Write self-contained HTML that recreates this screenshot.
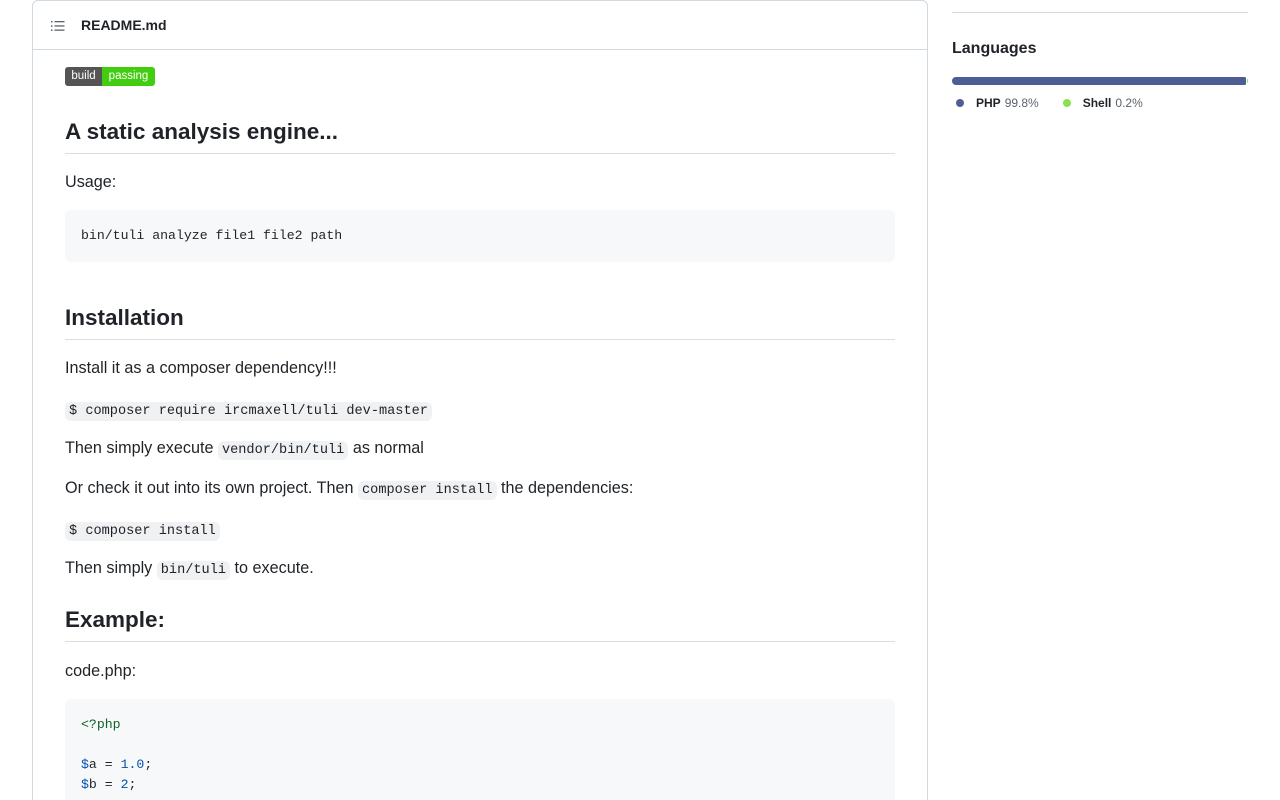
<!DOCTYPE html>
<html><head><meta charset="utf-8"><style>
*{box-sizing:border-box;margin:0;padding:0}
html,body{width:1280px;height:800px;overflow:hidden}
body{background:#fff;font-family:"Liberation Sans",sans-serif;color:#1f2328;position:relative}
.box{position:absolute;left:32px;top:0;width:896px;height:830px;border:1px solid #d1d9e0;border-radius:6px}
.hdr{position:absolute;left:0;top:0;right:0;height:49px;border-bottom:1px solid #d1d9e0}
.hdr span{position:absolute;left:48px;top:16px;font-size:14px;font-weight:bold}
.a{position:absolute;left:65px;white-space:nowrap}
p.a{font-size:16.2px;line-height:24px}
h2.a{font-size:22.5px;font-weight:bold;line-height:30px;width:830px;border-bottom:1px solid #d8dee4;padding-bottom:6px}
code{font-family:"Liberation Mono",monospace;font-size:13.6px;background:#eff1f3;border-radius:6px;padding:2px 4px}
.pre{position:absolute;left:65px;width:830px;background:#f6f8fa;border-radius:6px;font-family:"Liberation Mono",monospace;font-size:13.2px;padding:16px;line-height:20px;white-space:pre}
.g{color:#116329}.b{color:#0550ae}
.badge{position:absolute;left:65px;top:67px;height:19px;font-size:11.5px;color:#fff;display:flex;border-radius:3px;overflow:hidden;width:90px}
.badge span{line-height:19px;text-align:center}
</style></head><body>
<div class="box"><div class="hdr">
<svg style="position:absolute;left:17px;top:17px" width="16" height="16" viewBox="0 0 16 16" fill="#59636e"><rect x="1" y="3" width="1.5" height="1.5"/><rect x="1" y="7.3" width="1.5" height="1.5"/><rect x="1" y="11.5" width="1.5" height="1.5"/><rect x="4.5" y="3" width="10" height="1.3"/><rect x="4.5" y="7.3" width="10" height="1.3"/><rect x="4.5" y="11.5" width="10" height="1.3"/></svg>
<span>README.md</span></div></div>
<div class="badge"><span style="background:#555;width:37px">build</span><span style="background:#4c1;flex:1">passing</span></div>
<h2 class="a" style="top:117px">A static analysis engine...</h2>
<p class="a" style="top:170px">Usage:</p>
<div class="pre" style="top:210px;height:52px">bin/tuli analyze file1 file2 path</div>
<h2 class="a" style="top:303px">Installation</h2>
<p class="a" style="top:356px">Install it as a composer dependency!!!</p>
<p class="a" style="top:397px"><code>$ composer require ircmaxell/tuli dev-master</code></p>
<p class="a" style="top:436px">Then simply execute <code>vendor/bin/tuli</code> as normal</p>
<p class="a" style="top:476px">Or check it out into its own project. Then <code>composer install</code> the dependencies:</p>
<p class="a" style="top:517px"><code>$ composer install</code></p>
<p class="a" style="top:556px">Then simply <code>bin/tuli</code> to execute.</p>
<h2 class="a" style="top:605px">Example:</h2>
<p class="a" style="top:659px">code.php:</p>
<div class="pre" style="top:699px;height:120px"><span class="g">&lt;?php</span>

<span class="b">$</span>a = <span class="b">1.0</span>;
<span class="b">$</span>b = <span class="b">2</span>;</div>
<div style="position:absolute;left:952px;top:12px;width:296px;border-top:1px solid #d1d9e0"></div>
<div style="position:absolute;left:952px;top:40px;font-size:16px;font-weight:bold">Languages</div>
<div style="position:absolute;left:952px;top:77px;width:296px;height:8px;border-radius:4px;overflow:hidden;display:flex"><div style="width:99.2%;background:#4f5d95"></div><div style="flex:1;background:#89e051;margin-left:1px"></div></div>
<div style="position:absolute;left:956px;top:95px;font-size:12px;line-height:16px;display:flex;align-items:center;color:#59636e">
<span style="width:8px;height:8px;border-radius:50%;background:#4f5d95;margin-right:12px"></span><b style="color:#1f2328;margin-right:4px">PHP</b>99.8%
<span style="width:8px;height:8px;border-radius:50%;background:#89e051;margin:0 12px 0 24px"></span><b style="color:#1f2328;margin-right:4px">Shell</b>0.2%</div>
</body></html>
